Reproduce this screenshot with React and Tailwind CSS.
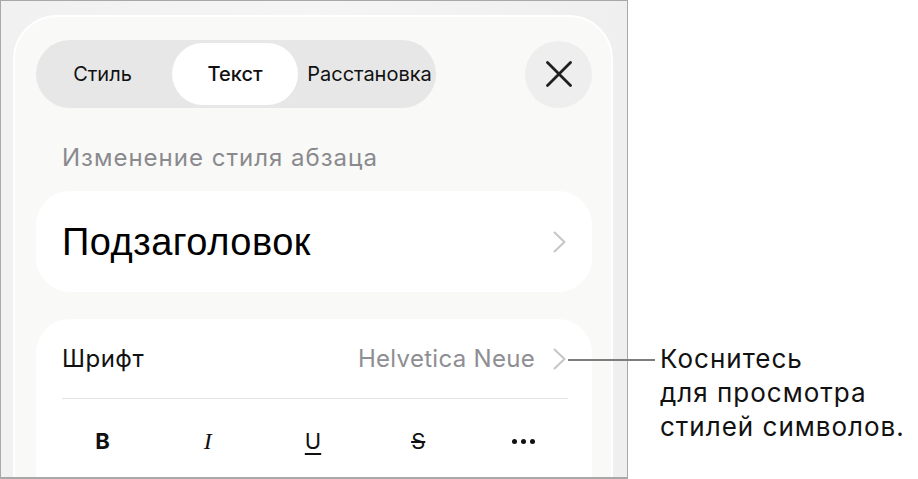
import React from "react";

function Chevron({ className }) {
  return (
    <svg viewBox="0 0 13 22" className={className} fill="none">
      <path d="M1.5 1.5 L11.5 11 L1.5 20.5" stroke="currentColor" strokeWidth="2" strokeLinecap="round" strokeLinejoin="round" />
    </svg>
  );
}

function CloseIcon() {
  return (
    <svg viewBox="0 0 26 26" className="w-[26px] h-[26px]" fill="none">
      <path d="M1.5 1.5 L24.5 24.5 M24.5 1.5 L1.5 24.5" stroke="#1f1f1f" strokeWidth="2.8" strokeLinecap="round" />
    </svg>
  );
}

export default function App() {
  return (
    <div className="relative w-[918px] h-[479px] bg-white flex font-['Inter',sans-serif] text-[#111] overflow-hidden">
      {/* device frame */}
      <div className="w-[628px] h-[479px] border border-b-2 border-[#a8a8a8] bg-gradient-to-r from-[#f1f1f1] via-[#f5f5f5] to-[#efefef] pl-[12px] pr-[14px] pt-[14px] overflow-hidden shrink-0">
        <div className="h-[520px] rounded-t-[44px] border-2 border-white bg-[#f9f9f8] pl-[21px] pr-[19px] pt-[23px]">
          {/* tabs + close */}
          <div className="flex items-center justify-between">
            <div className="w-[400px] h-[68px] rounded-full bg-[#e7e7e7] p-[3px] flex items-center text-[20px]">
              <div className="w-[133px] h-full flex items-center justify-center pr-[6px]">Стиль</div>
              <div className="w-[126px] h-full rounded-full bg-white flex items-center justify-center font-medium">Текст</div>
              <div className="flex-1 h-full flex items-center justify-center pl-[8px]">Расстановка</div>
            </div>
            <div className="w-[67px] h-[67px] rounded-full bg-[#eeeeee] flex items-center justify-center">
              <CloseIcon />
            </div>
          </div>

          <div className="mt-[36px] pl-[26px] text-[24px] tracking-[1px] leading-[28px] text-[#8a8a8e]">Изменение стиля абзаца</div>

          {/* paragraph style */}
          <div className="mt-[19px] h-[101px] rounded-[34px] bg-white flex items-center justify-between pl-[26px] pr-[26px]">
            <span className="font-['Liberation_Sans',Arial,sans-serif] text-[38px] tracking-[0.5px] leading-[44px] text-black">Подзаголовок</span>
            <Chevron className="w-[13px] h-[22px] text-[#c6c6c8]" />
          </div>

          {/* character settings */}
          <div className="mt-[27px] rounded-t-[34px] bg-white pl-[26px] pr-[24px] pb-[20px]">
            <div className="h-[79px] flex items-center justify-between">
              <span className="text-[24px] tracking-[0.5px]">Шрифт</span>
              <div className="flex items-center gap-[18px] pr-[2px]">
                <span className="text-[24px] tracking-[0.3px] text-[#8e8e93]">Helvetica Neue</span>
                <Chevron className="w-[13px] h-[22px] text-[#c6c6c8]" />
              </div>
            </div>
            <div className="h-px bg-[#e3e3e5]" />
            <div className="-ml-[12px] w-[526px] h-[84px] grid grid-cols-5 items-center justify-items-center text-[22px] text-[#111]">
              <span className="font-bold">B</span>
              <span className="italic font-['Liberation_Serif',serif] text-[24px]">I</span>
              <span className="underline underline-offset-[4px] decoration-[1.5px]">U</span>
              <span className="line-through decoration-[1.5px]">S</span>
              <span className="flex gap-[4px]">
                <span className="w-[5px] h-[5px] rounded-full bg-[#111]" />
                <span className="w-[5px] h-[5px] rounded-full bg-[#111]" />
                <span className="w-[5px] h-[5px] rounded-full bg-[#111]" />
              </span>
            </div>
          </div>
        </div>
      </div>

      {/* callout leader */}
      <div className="absolute left-[568px] top-[359px] w-[87px] h-[1.5px] bg-[#7d7d7d]" />

      <div className="pl-[32px] pt-[342px] text-[26px] tracking-[1px] leading-[34px] text-[#111]">
        <div>Коснитесь</div>
        <div>для просмотра</div>
        <div>стилей символов.</div>
      </div>
    </div>
  );
}
